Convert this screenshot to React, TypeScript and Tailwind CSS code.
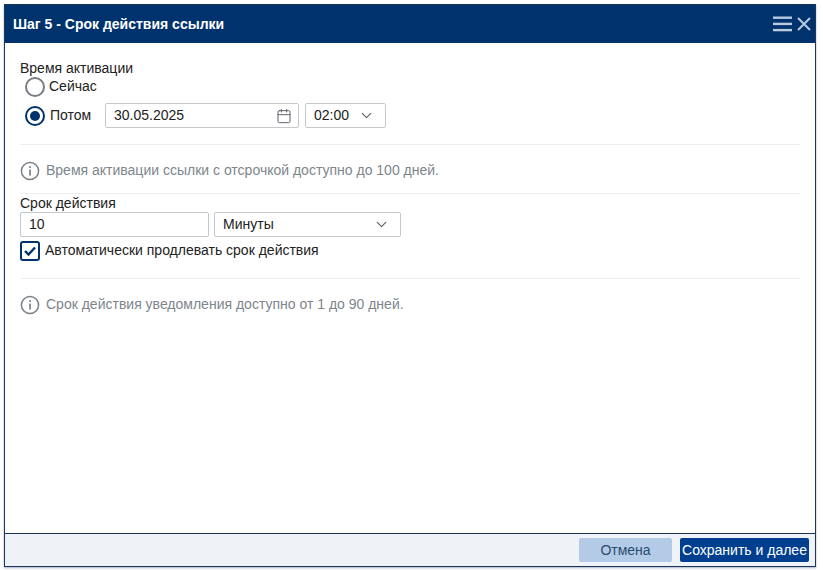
import { Calendar, ChevronDown } from 'lucide-react'

const font = "[font-family:'Liberation_Sans',Arial,sans-serif]"

function Select({ value, className }: { value: string; className: string }) {
  return (
    <div className={`flex h-[25px] items-center justify-between rounded-[2px] border border-[#c4c8cc] bg-white pl-[8px] pr-[10px] text-[14px] text-[#222] ${className}`}>
      <span>{value}</span>
      <ChevronDown size={17} strokeWidth={1.6} className="text-[#555b63]" />
    </div>
  )
}

function InfoNote({ text }: { text: string }) {
  return (
    <div className="flex items-center gap-[6px] text-[14px] text-[#7e858c]">
      <svg width="20" height="20" viewBox="0 0 20 20" fill="none" className="shrink-0">
        <circle cx="10" cy="10" r="8.6" stroke="#7b8086" strokeWidth="1.5" />
        <rect x="9.2" y="8.6" width="1.7" height="6" fill="#7b8086" />
        <rect x="9.2" y="5.2" width="1.7" height="1.8" fill="#7b8086" />
      </svg>
      <span>{text}</span>
    </div>
  )
}

export default function App() {
  return (
    <div className={`h-[570px] w-[823px] overflow-hidden bg-white pb-[3px] pl-[4px] pr-[7px] pt-[4px] ${font}`}>
      <div className="flex h-full flex-col border border-[#1c3558] bg-white shadow-[0_1px_2px_#9fb0c8]">
        <header className="flex h-[38px] shrink-0 items-center justify-between bg-[#00336e] pl-[8px] pr-[4px]">
          <h1 className="text-[14px] font-bold text-white">Шаг 5 - Срок действия ссылки</h1>
          <div className="flex items-center gap-[5px] text-[#b9c9de]">
            <svg width="19" height="16" viewBox="0 0 19 16" fill="currentColor">
              <rect x="0" y="0.5" width="19" height="2.4" />
              <rect x="0" y="6.7" width="19" height="2.4" />
              <rect x="0" y="12.9" width="19" height="2.4" />
            </svg>
            <svg width="14" height="14" viewBox="0 0 14 14" stroke="currentColor" strokeWidth="2">
              <path d="M1 1l12 12M13 1L1 13" />
            </svg>
          </div>
        </header>

        <main className="min-h-0 flex-1 px-[15px] pt-[16px]">
          <div className="text-[14px] leading-[18px] text-[#222]">Время активации</div>
          <div className="flex h-[20px] items-center gap-[4px] pl-[5px] text-[14px] text-[#222]">
            <span className="h-[20px] w-[20px] rounded-full border-2 border-[#777d85]" />
            <span className="-mt-[2px]">Сейчас</span>
          </div>
          <div className="mt-[6px] flex items-center pl-[5px] text-[14px] text-[#222]">
            <span className="flex h-[20px] w-[20px] items-center justify-center rounded-full border-2 border-[#00336e]">
              <span className="h-[10px] w-[10px] rounded-full bg-[#00336e]" />
            </span>
            <span className="ml-[5px] w-[55px]">Потом</span>
            <div className="flex h-[25px] w-[194px] items-center justify-between rounded-[2px] border border-[#c4c8cc] pl-[8px] pr-[6px]">
              <span>30.05.2025</span>
              <Calendar size={16} strokeWidth={1.5} className="text-[#5f656c]" />
            </div>
            <Select value="02:00" className="ml-[6px] w-[81px]" />
          </div>

          <div className="mt-[16px] border-t border-[#eceef0] pb-[15px]" />
          <InfoNote text="Время активации ссылки с отсрочкой доступно до 100 дней." />
          <div className="mt-[12px] border-t border-[#eceef0]" />

          <div className="mt-[1px] text-[14px] leading-[17px] text-[#222]">Срок действия</div>
          <div className="flex gap-[5px] text-[14px] text-[#222]">
            <div className="flex h-[25px] w-[189px] items-center rounded-[2px] border border-[#c4c8cc] pl-[8px]">10</div>
            <Select value="Минуты" className="w-[187px]" />
          </div>
          <div className="mt-[4px] flex items-center gap-[5px] text-[14px] text-[#222]">
            <span className="flex h-[20px] w-[20px] items-center justify-center rounded-[3px] border-2 border-[#00336e]">
              <svg width="12" height="10" viewBox="0 0 12 10" fill="none" stroke="#00336e" strokeWidth="2.4">
                <path d="M1 5l3.5 3.5L11 1.5" />
              </svg>
            </span>
            <span className="-mt-[2px]">Автоматически продлевать срок действия</span>
          </div>

          <div className="mt-[17px] border-t border-[#eceef0] pb-[15px]" />
          <InfoNote text="Срок действия уведомления доступно от 1 до 90 дней." />
        </main>

        <footer className="flex h-[33px] shrink-0 items-center justify-end gap-[8px] border-t border-t-[#1c3558] bg-[#eff3f8] pr-[6px]">
          <button className="h-[24px] w-[93px] rounded-[2px] bg-[#b4cbe8] text-[14px] text-[#2b4a70]">Отмена</button>
          <button className="h-[24px] w-[129px] rounded-[2px] bg-[#003f8f] text-[14px] text-white">Сохранить и далее</button>
        </footer>
      </div>
    </div>
  )
}
